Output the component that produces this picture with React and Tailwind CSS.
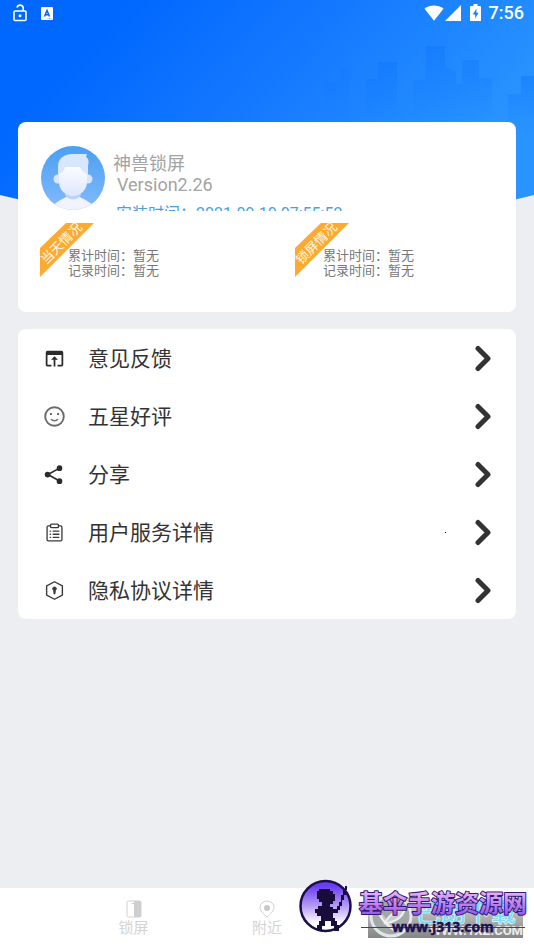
import { useState } from 'react';

const FeedbackIcon = () => (
  <svg viewBox="0 0 24 24" className="w-[21px] h-[21px]" fill="#2b2b2b">
    <path d="M20 3H4a2 2 0 0 0-2 2v14c0 1.100.9 2 2 2h4.500v-2H4V8h16v11h-4.500v2H20a2 2 0 0 0 2-2V5a2 2 0 0 0-2-2z" />
    <path d="M12 9.500l-4 4h3V21h2v-7.500h3z" />
  </svg>
);

const SmileIcon = () => (
  <svg viewBox="0 0 24 24" className="w-[23px] h-[23px]" fill="none" stroke="#6b6b6b" strokeWidth="2" strokeLinecap="round">
    <circle cx="12" cy="12" r="9.700" />
    <path d="M8.800 15.200c1.600 1.600 4.800 1.600 6.400 0" strokeWidth="1.600" />
    <circle cx="8.300" cy="9.500" r="1.200" fill="#555" stroke="none" />
    <circle cx="15.700" cy="9.500" r="1.200" fill="#555" stroke="none" />
  </svg>
);

const ShareIcon = () => (
  <svg viewBox="0 0 24 24" className="w-[22px] h-[22px]" fill="#2b2b2b" stroke="#2b2b2b" strokeWidth="1.800">
    <path d="M18 4.500L5.500 11.500L18 18.500" fill="none" />
    <circle cx="18" cy="4.500" r="2.200" />
    <circle cx="5" cy="11.500" r="2.200" />
    <circle cx="18" cy="18.700" r="2.200" />
  </svg>
);

const ClipboardIcon = () => (
  <svg viewBox="0 0 24 24" className="w-[21px] h-[21px]" fill="none" stroke="#3a3a3a" strokeWidth="1.500" strokeLinecap="round">
    <path d="M7.500 4.500H5A1.500 1.500 0 0 0 3.500 6v14A1.500 1.500 0 0 0 5 21.500h14a1.500 1.500 0 0 0 1.500-1.500V6A1.500 1.500 0 0 0 19 4.500h-2.500" />
    <rect x="7.500" y="2.500" width="9" height="4" rx="1" />
    <path d="M10.500 10.500h6.500M10.500 14h6.500M10.500 17.500h6.500M7 10.500h.5M7 14h.5M7 17.500h.5" />
  </svg>
);

const PrivacyIcon = () => (
  <svg viewBox="0 0 24 24" className="w-[21px] h-[21px]" fill="none" stroke="#3a3a3a" strokeWidth="1.600" strokeLinejoin="round">
    <path d="M12 2l9 4.800v10.400L12 22l-9-4.800V6.800z" />
    <path d="M12 8a2 2 0 0 1 1 3.800L12.500 16h-1L11 11.800A2 2 0 0 1 12 8z" fill="#3a3a3a" strokeWidth="1" />
  </svg>
);

const Chevron = () => (
  <svg viewBox="0 0 18 28" className="w-[18px] h-7" fill="none" stroke="#333" strokeWidth="5" strokeLinecap="round" strokeLinejoin="round">
    <path d="M4 3.500l10 10L4 23.500" />
  </svg>
);

const menuItems = [
  { label: '意见反馈', Icon: FeedbackIcon },
  { label: '五星好评', Icon: SmileIcon },
  { label: '分享', Icon: ShareIcon },
  { label: '用户服务详情', Icon: ClipboardIcon, dot: true },
  { label: '隐私协议详情', Icon: PrivacyIcon },
];

const stats = [
  { title: '当天情况', total: '暂无', record: '暂无' },
  { title: '锁屏情况', total: '暂无', record: '暂无' },
];

const StatusBar = () => (
  <div className="flex items-center justify-between h-[26px] pl-3 pr-[10px] text-white">
    <div className="flex items-center gap-[13px]">
      <svg viewBox="0 0 16 20" className="w-4 h-5" fill="none" stroke="#fff" strokeWidth="1.600">
        <rect x="2" y="8" width="12" height="9.500" rx="1" />
        <path d="M5 4.500a3.200 3.200 0 0 1 6.200 0V8" />
        <circle cx="8" cy="12.700" r="1.500" fill="#fff" stroke="none" />
      </svg>
      <svg viewBox="0 0 12 13" className="w-3 h-[13px]">
        <rect width="12" height="13" rx="1" fill="#fff" />
        <path d="M3.500 9.500L6 3.500l2.500 6M4.300 7.700h3.400" fill="none" stroke="#0a62e8" strokeWidth="1.500" />
        <path d="M6.500 11.700h4" stroke="#5f9dff" strokeWidth="1" strokeDasharray="1 .6" />
      </svg>
    </div>
    <div className="flex items-center">
      <svg viewBox="0 0 20 16" className="w-5 h-4" fill="#fff">
        <path d="M.5 3.800C6-.6 14-.6 19.500 3.800L10 15.800z" />
      </svg>
      <svg viewBox="0 0 16 16" className="w-4 h-4 ml-px" fill="#fff">
        <path d="M0 16L16 0v16z" />
      </svg>
      <svg viewBox="0 0 11 18" className="w-[11px] h-[18px] ml-[9px]">
        <path d="M3.500 0h4v2H10a1 1 0 0 1 1 1v14H0V3a1 1 0 0 1 1-1h2.500z" fill="#fff" />
        <path d="M6.500 4.500L2.800 10.500h2.400v4L8.500 8.700H6.300z" fill="#1d7bf5" />
      </svg>
      <span className="ml-2 text-lg font-medium leading-6">7:56</span>
    </div>
  </div>
);

const HeaderBackground = () => (
  <svg viewBox="0 0 534 230" preserveAspectRatio="none" className="col-start-1 row-start-1 w-full h-[230px]">
    <defs>
      <linearGradient id="sky" x1="0" y1="0" x2="1" y2="0.400">
        <stop offset="0.200" stopColor="#0067ff" />
        <stop offset="0.550" stopColor="#1478ff" />
        <stop offset="1" stopColor="#2994ff" />
      </linearGradient>
      <linearGradient id="city" x1="0" y1="0" x2="0" y2="1">
        <stop offset="0" stopColor="#0d76fb" stopOpacity="0.450" />
        <stop offset="1" stopColor="#0d76fb" stopOpacity="0" />
      </linearGradient>
    </defs>
    <path d="M0 0h534v195Q267 262 0 195z" fill="url(#sky)" />
    <g fill="url(#city)">
      <path d="M324 122V82h16V68h9v54z" opacity="0.600" />
      <path d="M366 122V79h12V62h19v60z" />
      <path d="M413 122V80h13V46h19v21l11 4v13h6V60h17v18h13v44z" />
      <path d="M508 135V94h13V76h13v59z" />
    </g>
  </svg>
);

const Avatar = () => (
  <svg viewBox="0 0 64 64" className="w-16 h-16 shrink-0">
    <defs>
      <linearGradient id="avatarBg" x1="0" y1="0" x2="0" y2="1">
        <stop offset="0" stopColor="#4b9ff0" />
        <stop offset="1" stopColor="#82baff" />
      </linearGradient>
      <linearGradient id="face" x1="0" y1="0" x2="0" y2="1">
        <stop offset="0" stopColor="#fafcff" />
        <stop offset="1" stopColor="#dfe7fd" />
      </linearGradient>
      <clipPath id="avatarClip">
        <circle cx="32" cy="32" r="32" />
      </clipPath>
    </defs>
    <g clipPath="url(#avatarClip)">
      <rect width="64" height="64" fill="url(#avatarBg)" />
      <path d="M10 64c2-7 8-9 15-13h14c7 4 13 6 15 13z" fill="#f1f4ff" />
      <path d="M24 49c4 6 12 6 16 0l-2-5H26z" fill="#bcd4fa" />
      <path d="M17 34V20C17 12 24 8 31 8h15l-1 3c3 2 3 5 2 9v14z" fill="#d7e8fd" />
      <circle cx="17" cy="33" r="4.500" fill="#d9e6fd" />
      <circle cx="47" cy="33" r="4.500" fill="#d9e6fd" />
      <path d="M18 28c3-1 5-3 6-7h15c1 3 4 6 7 7v8c0 9-8 14-14 14s-14-5-14-14z" fill="url(#face)" />
    </g>
  </svg>
);

const Ribbon = ({ title }) => (
  <svg viewBox="0 0 54 54" className="w-[54px] h-[54px]">
    <path d="M0 25L26 0h28L0 54z" fill="#fbab32" />
    <text
      x="21"
      y="25"
      transform="rotate(-45 21 20)"
      textAnchor="middle"
      fontSize="13"
      fill="#fff6e4"
    >
      {title}
    </text>
  </svg>
);

const StatBlock = ({ title, total, record }) => (
  <div className="flex items-start">
    <Ribbon title={title} />
    <div className="-ml-[26px] mt-[25px] text-[13px] leading-[15px] text-[#777] whitespace-nowrap">
      <p>累计时间：{total}</p>
      <p>记录时间：{record}</p>
    </div>
  </div>
);

const Watermark = () => (
  <svg viewBox="0 0 236 66" className="absolute right-1 bottom-[6px] w-[236px] h-[66px] pointer-events-none">
    <defs>
      <linearGradient id="badge" x1="0" y1="0" x2="0" y2="1">
        <stop offset="0.100" stopColor="#6a3df0" />
        <stop offset="0.500" stopColor="#b59cf5" />
        <stop offset="0.850" stopColor="#ffffff" />
      </linearGradient>
      <linearGradient id="title" x1="0" y1="0" x2="0" y2="1">
        <stop offset="0.100" stopColor="#e8aef0" />
        <stop offset="0.900" stopColor="#9257ea" />
      </linearGradient>
      <linearGradient id="plate" x1="0" y1="0" x2="0" y2="1">
        <stop offset="0" stopColor="#d5d5d5" />
        <stop offset="1" stopColor="#858585" />
      </linearGradient>
    </defs>
    <rect x="74" y="22" width="155" height="38" fill="url(#plate)" />
    <circle cx="97" cy="38" r="20" fill="#a2a8a8" stroke="#e3e6e6" strokeWidth="3" />
    <path d="M81 27c6 14 10 20 22 27M91 45c4-8 8-11 20-15-2 9-8 14-20 15z" fill="#c9cdcd" stroke="#eef0f0" strokeWidth="2" />
    <text x="122" y="44" fontSize="25" fontWeight="700" fill="#79dcf5" stroke="#e6fbff" strokeWidth="0.600">巴朗下载</text>
    <text x="229" y="57" textAnchor="end" fontSize="13" fontWeight="700" fill="#ededed">WWW.1XZ.COM</text>
    <circle cx="31.500" cy="28" r="25" fill="url(#badge)" stroke="#1c0f48" strokeWidth="2.500" />
    <path
      d="M26 11h10v2h3v3h2v7h-2v3h-3v3h3v2h4v-3h2v-4h2v-7h2v-5h2v-4h2v4h-1v5h-2v5h-2v6h-2v4h-2v3h-5v5h2v3h2v4h2v6h-5v-5h-3v-5h-6v5h-3v5h-5v-6h2v-4h2v-5h-4v-3h-2v-4h3v-3h4v-4h-3v-3h-2v-8h2v-2h3z"
      fill="#180c3a"
    />
    <text
      x="65"
      y="34"
      fontSize="24"
      fontWeight="700"
      fill="url(#title)"
      stroke="#2f1a70"
      strokeWidth="2"
      strokeLinejoin="round"
      paintOrder="stroke"
    >
      基伞手游资源网
    </text>
    <path d="M67 49.500h164" stroke="#4a35a0" strokeWidth="1" />
    <text
      x="98"
      y="54"
      fontSize="14"
      fontWeight="700"
      fill="#1b1150"
      stroke="#1b1150"
      strokeWidth="0.400"
      fontFamily="Open Sans, Noto Sans, sans-serif"
    >
      www.j313.com
    </text>
  </svg>
);

const App = () => {
  const [activeTab, setActiveTab] = useState('mine');

  return (
    <div className="relative flex flex-col min-h-screen overflow-hidden bg-[#edeef2] font-[Roboto,'Noto_Sans_CJK_SC',sans-serif]">
      <header className="grid">
        <HeaderBackground />
        <div className="col-start-1 row-start-1">
          <StatusBar />
        </div>
      </header>

      <main className="relative flex flex-col gap-[17px] px-[18px] -mt-[108px]">
        <section className="h-[190px] px-[22px] pt-6 bg-white rounded-lg">
          <div className="flex gap-2 h-[65px] pl-px overflow-hidden">
            <Avatar />
            <div className="pt-[7px] text-lg leading-[21px] text-[#a3a3a3] whitespace-nowrap">
              <h1>神兽锁屏</h1>
              <p className="pl-1">Version2.26</p>
              <p className="pl-[3px] pt-[9px] text-base leading-5 text-[#4a9fdc]">安装时间：2021-09-10 07:55:52</p>
            </div>
          </div>
          <div className="grid grid-cols-2 gap-14 mt-3">
            {stats.map((stat) => (
              <StatBlock key={stat.title} {...stat} />
            ))}
          </div>
        </section>

        <nav className="bg-white rounded-lg">
          {menuItems.map(({ label, Icon, dot }) => (
            <button key={label} type="button" className="flex items-center w-full h-[58px] pt-px px-6 text-left">
              <span className="flex justify-center w-6">
                <Icon />
              </span>
              <span className="ml-[22px] text-[21px] leading-7 text-[#333]">{label}</span>
              <span className="flex items-center gap-7 ml-auto">
                {dot && <span className="w-px h-px bg-black" />}
                <Chevron />
              </span>
            </button>
          ))}
        </nav>
      </main>

      <footer className="grid grid-cols-3 h-[62px] px-[12.5%] mt-auto bg-white text-[15px] leading-5 text-[#d4d4d4]">
        <button type="button" onClick={() => setActiveTab('lock')} aria-pressed={activeTab === 'lock'} className="flex flex-col items-center pt-3">
          <svg viewBox="0 0 16 18" className="w-4 h-[18px]">
            <rect x="1" y="1" width="14" height="16" rx="1.500" fill="none" stroke="#d0d0d0" />
            <path d="M8 1h6a1 1 0 0 1 1 1v14a1 1 0 0 1-1 1H8z" fill="#cfcfcf" />
            <path d="M5.500 3.500H8" stroke="#d0d0d0" />
          </svg>
          <span>锁屏</span>
        </button>
        <button type="button" onClick={() => setActiveTab('nearby')} aria-pressed={activeTab === 'nearby'} className="flex flex-col items-center pt-3">
          <svg viewBox="0 0 16 18" className="w-4 h-[18px]">
            <path d="M8 17C4 13 1 11 1 7.500a7 6.500 0 0 1 14 0C15 11 12 13 8 17z" fill="none" stroke="#d0d0d0" />
            <circle cx="8" cy="8" r="3" fill="#c8c8c8" />
          </svg>
          <span>附近</span>
        </button>
      </footer>

      <Watermark />
    </div>
  );
};

export default App;
